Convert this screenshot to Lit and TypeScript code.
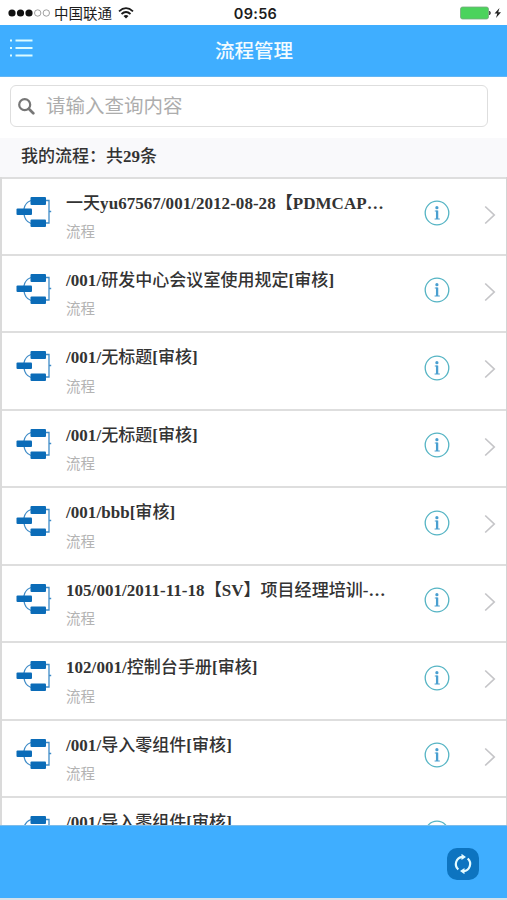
import { LitElement, html, css, svg } from "lit";
import { customElement } from "lit/decorators.js";

const rows = [
  "一天yu67567/001/2012-08-28【PDMCAP…",
  "/001/研发中心会议室使用规定[审核]",
  "/001/无标题[审核]",
  "/001/无标题[审核]",
  "/001/bbb[审核]",
  "105/001/2011-11-18【SV】项目经理培训-…",
  "102/001/控制台手册[审核]",
  "/001/导入零组件[审核]",
  "/001/导入零组件[审核]",
];

// Han runs use a lighter weight than the bold Latin serif around them.
const mixed = (text: string) =>
  text
    .split(/([\u3000-\u9fff\uff00-\uffef]+)/)
    .filter(Boolean)
    .map((part) => (/[\u3000-\u9fff\uff00-\uffef]/.test(part) ? html`<span class="han">${part}</span>` : part));

const flowIcon = svg`<svg class="flow" width="36" height="32" viewBox="0 0 36 32">
  <g fill="none" stroke="#3f8cc8" stroke-width="1.3">
    <path d="M15 4.500C11 6 8.500 9 8 13M8 18C8.500 23 11 26 15 27.500M29 4.500H33V27H29M33 15.500H35.200"/>
  </g>
  <g fill="#0b6cb8"><rect x="14.500" y="1" width="15.500" height="8" rx="1"/><rect x=".5" y="12.500" width="15.500" height="6.500" rx="1"/><rect x="14.500" y="23.500" width="15.500" height="7.500" rx="1"/></g>
</svg>`;

const infoIcon = svg`<svg class="info" width="26" height="26" viewBox="0 0 26 26">
  <circle cx="13" cy="13" r="11.800" fill="none" stroke="#55b4c4" stroke-width="1.300"/>
  <circle cx="12.900" cy="7.700" r="1.600" fill="#4a9fd0"/>
  <path d="M10.800 11H13.600M10.600 19H15.800" fill="none" stroke="#4a9fd0" stroke-width="1"/>
  <path d="M13.100 10.600V19" stroke="#4a9fd0" stroke-width="2.300"/>
</svg>`;

@customElement("app-root")
export class AppRoot extends LitElement {
  static styles = css`
    :host { display: flex; flex-direction: column; width: 507px; height: 900px; overflow: hidden; background: #fff; font-family: "Liberation Sans", "Noto Sans CJK SC", sans-serif; color: #333; }
    * { box-sizing: border-box; }
    svg { display: block; flex: none; }
    .status { height: 25px; flex: none; display: grid; grid-template-columns: 1fr auto 1fr; align-items: center; padding: 2px 4px 0 8px; color: #1c1c1c; }
    .carrier { display: flex; align-items: center; font: 14.5px/20px "Noto Sans CJK SC", sans-serif; margin-top: -1px; }
    .dots { margin-right: 3px; }
    .wifi { margin-left: 6px; }
    .time { font: 600 14.5px/20px Inter, sans-serif; letter-spacing: .3px; }
    .power { justify-self: end; margin-top: -1px; }
    .nav { height: 52px; flex: none; background: #3faeff; border-bottom: 1px solid #62b6f5; display: grid; grid-template-columns: 1fr auto 1fr; align-items: center; padding: 0 10px; color: #f2fbff; }
    .menu { margin-top: -6px; }
    .title { font: 500 19.5px/28px "Noto Sans CJK SC", sans-serif; margin-right: -1px; margin-top: -2px; }
    .search { height: 42px; flex: none; margin: 8px 19px 11px 10px; border: 1.5px solid #dedede; border-radius: 6px; display: flex; align-items: center; padding-left: 7px; }
    .placeholder { margin-left: 11px; font: 19.5px/28px "Noto Sans CJK SC", sans-serif; color: #adadad; margin-top: -2px; }
    .summary { height: 38.5px; flex: none; background: #f9f9fb; padding: 0 21px; font: bold 17px/38px "Liberation Serif", "Noto Sans CJK SC", serif; }
    .han { font-weight: 500; }
    .list { flex: 1; min-height: 0; overflow: hidden; border-left: 2px solid #dadada; border-right: 1px solid #d4d4d4; }
    .row { height: 77.45px; border-top: 2px solid #dedede; display: flex; align-items: flex-start; padding-left: 14px; }
    .flow { margin-top: 17px; }
    .text { width: 358px; margin-left: 14px; padding-top: 12px; }
    .name { font: bold 17px/25px "Liberation Serif", "Noto Sans CJK SC", serif; letter-spacing: .04px; white-space: nowrap; }
    .kind { font: 14.5px/22px "Noto Sans CJK SC", sans-serif; color: #b3b3b3; margin-top: 4.5px; }
    .info { margin-top: 21.5px; }
    .arrow { margin: 26px 0 0 34px; }
    .footer { height: 75px; flex: none; background: #3faeff; border-top: 1px solid #7cbcea; border-bottom: 2px solid #d5e2eb; display: flex; justify-content: flex-end; padding: 22px 28px 0 0; }
    .refresh { width: 32px; height: 32px; border-radius: 10px; background: #0d74c0; display: grid; place-items: center; }
  `;

  render() {
    return html`
      <div class="status">
        <div class="carrier">
          <svg class="dots" width="43" height="8" viewBox="0 0 43 8">
            <g fill="#111"><circle cx="4" cy="4" r="3.600"/><circle cx="12.500" cy="4" r="3.600"/><circle cx="21" cy="4" r="3.600"/></g>
            <g fill="none" stroke="#888" stroke-width=".8"><circle cx="29.700" cy="4" r="3.200"/><circle cx="38.300" cy="4" r="3.200"/></g>
          </svg>
          <span>中国联通</span>
          <svg class="wifi" width="16" height="12" viewBox="0 0 16 12">
            <path d="M1 4.300Q8-2 15 4.300M3.500 7Q8 3 12.500 7" fill="none" stroke="#1a1a1a" stroke-width="1.800"/>
            <path d="M5.500 9Q8 6.800 10.500 9L8 11.500Z" fill="#1a1a1a"/>
          </svg>
        </div>
        <div class="time">09:56</div>
        <svg class="power" width="43" height="14" viewBox="0 0 43 14">
          <rect x=".5" y="1" width="28" height="12" rx="2" fill="#4bd35c" stroke="#77a97d" stroke-width=".8"/>
          <path d="M29.500 5Q31.500 7 29.500 9Z" fill="#333" stroke="#333" stroke-width=".6"/>
          <path d="M39.500 2L34.500 7.500H37.300L36 12L41 6.300H38.200Z" fill="#222"/>
        </svg>
      </div>
      <div class="nav">
        <svg class="menu" width="24" height="18" viewBox="0 0 24 18">
          <path d="M5.500 1.500H22.500M5.500 9H22.500M5.500 16.500H22.500M0 1.500H2M0 9H2M0 16.500H2" stroke="#dcfbff" stroke-width="1.800"/>
        </svg>
        <div class="title">流程管理</div>
      </div>
      <div class="search">
        <svg width="17" height="17" viewBox="0 0 17 17" fill="none" stroke="#777">
          <circle cx="6.700" cy="6.700" r="5.500" stroke-width="2.200"/><path d="M11 11L15.300 15.300" stroke-width="2.700" stroke-linecap="round"/>
        </svg>
        <span class="placeholder">请输入查询内容</span>
      </div>
      <div class="summary">${mixed("我的流程：共29条")}</div>
      <div class="list">
        ${rows.map(
          (name) => html`<div class="row">
            ${flowIcon}
            <div class="text">
              <div class="name">${mixed(name)}</div>
              <div class="kind">流程</div>
            </div>
            ${infoIcon}
            <svg class="arrow" width="12" height="20" viewBox="0 0 12 20">
              <path d="M1.200 1.500L10.200 10L1.200 18.500" fill="none" stroke="#c5c5c8" stroke-width="1.700"/>
            </svg>
          </div>`
        )}
      </div>
      <div class="footer">
        <div class="refresh">
          <svg width="20" height="20" viewBox="0 0 20 20">
            <path d="M5.300 15.500A7.300 7.300 0 0 1 9.500 2.800M14.700 4.500A7.300 7.300 0 0 1 10.500 17.200" fill="none" stroke="#e4fbff" stroke-width="2.200"/>
            <path d="M8.500 -.2L13 3L8.500 6ZM11.500 14L7 17L11.500 20.200Z" fill="#e4fbff"/>
          </svg>
        </div>
      </div>
    `;
  }
}
